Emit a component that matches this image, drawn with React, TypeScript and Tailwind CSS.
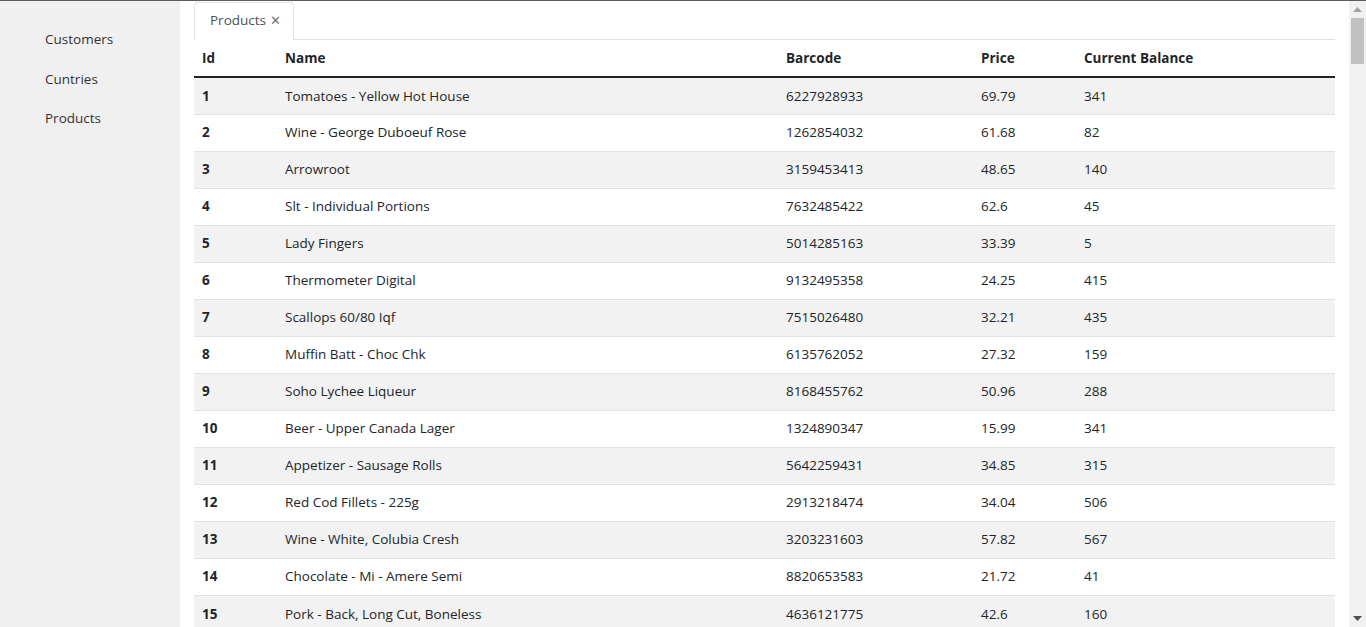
import React from "react";

const rows: [number, string, string, string, string][] = [
  [1, "Tomatoes - Yellow Hot House", "6227928933", "69.79", "341"],
  [2, "Wine - George Duboeuf Rose", "1262854032", "61.68", "82"],
  [3, "Arrowroot", "3159453413", "48.65", "140"],
  [4, "Slt - Individual Portions", "7632485422", "62.6", "45"],
  [5, "Lady Fingers", "5014285163", "33.39", "5"],
  [6, "Thermometer Digital", "9132495358", "24.25", "415"],
  [7, "Scallops 60/80 Iqf", "7515026480", "32.21", "435"],
  [8, "Muffin Batt - Choc Chk", "6135762052", "27.32", "159"],
  [9, "Soho Lychee Liqueur", "8168455762", "50.96", "288"],
  [10, "Beer - Upper Canada Lager", "1324890347", "15.99", "341"],
  [11, "Appetizer - Sausage Rolls", "5642259431", "34.85", "315"],
  [12, "Red Cod Fillets - 225g", "2913218474", "34.04", "506"],
  [13, "Wine - White, Colubia Cresh", "3203231603", "57.82", "567"],
  [14, "Chocolate - Mi - Amere Semi", "8820653583", "21.72", "41"],
  [15, "Pork - Back, Long Cut, Boneless", "4636121775", "42.6", "160"],
];

export default function App() {
  return (
    <div
      className="h-[627px] w-[1366px] overflow-hidden flex flex-col bg-white text-[13.5px] text-[#212529]"
      style={{ fontFamily: '"Open Sans", "Noto Sans", sans-serif' }}
    >
      <div className="h-px bg-[#5c5c5c] shrink-0" />
      <div className="flex flex-1 min-h-0">
        <aside className="w-[180px] shrink-0 bg-[#f0f0f0] pt-[28px] pl-[45px] flex flex-col gap-[18.5px] text-[#333]">
          <div className="leading-[21px]">Customers</div>
          <div className="leading-[21px]">Cuntries</div>
          <div className="leading-[21px]">Products</div>
        </aside>
        <main className="flex-1 min-w-0 pl-[14px] pr-[14px] pt-[1px]">
          <div className="flex border-b border-[#dee2e6]">
            <div className="h-[38px] pl-[15px] pr-[12px] pb-[2px] flex items-center gap-[4px] border border-b-0 border-[#dee2e6] rounded-t-[4px] bg-white text-[#495057] mb-[-1px]">
              <span>Products</span>
              <span className="text-[#6c757d] text-[13px] leading-none">✕</span>
            </div>
          </div>
          <table className="w-full border-collapse">
            <thead>
              <tr className="h-[37px] border-b-2 border-[#212529] text-left font-bold">
                <th className="w-[83px] px-[8px]">Id</th>
                <th className="w-[501px] px-[8px]">Name</th>
                <th className="w-[195px] px-[8px]">Barcode</th>
                <th className="w-[103px] px-[8px]">Price</th>
                <th className="px-[8px]">Current Balance</th>
              </tr>
            </thead>
            <tbody>
              {rows.map((r, i) => (
                <tr
                  key={r[0]}
                  className={`h-[37px] border-t border-[#dee2e6] ${i % 2 === 0 ? "bg-[#f2f2f2]" : "bg-white"}`}
                >
                  <td className="px-[8px] font-bold">{r[0]}</td>
                  <td className="px-[8px]">{r[1]}</td>
                  <td className="px-[8px]">{r[2]}</td>
                  <td className="px-[8px]">{r[3]}</td>
                  <td className="px-[8px]">{r[4]}</td>
                </tr>
              ))}
            </tbody>
          </table>
        </main>
        <div className="w-[17px] shrink-0 bg-[#f1f1f1] flex flex-col items-center">
          <div className="h-[17px] flex items-center justify-center">
            <svg width="9" height="5" viewBox="0 0 9 5"><path d="M0 5 L4.5 0 L9 5 Z" fill="#a3a3a3" /></svg>
          </div>
          <div className="w-[13px] h-[46px] bg-[#c1c1c1] mt-0" />
          <div className="flex-1" />
          <div className="h-[17px] flex items-center justify-center">
            <svg width="9" height="5" viewBox="0 0 9 5"><path d="M0 0 L9 0 L4.5 5 Z" fill="#505050" /></svg>
          </div>
        </div>
      </div>
    </div>
  );
}
